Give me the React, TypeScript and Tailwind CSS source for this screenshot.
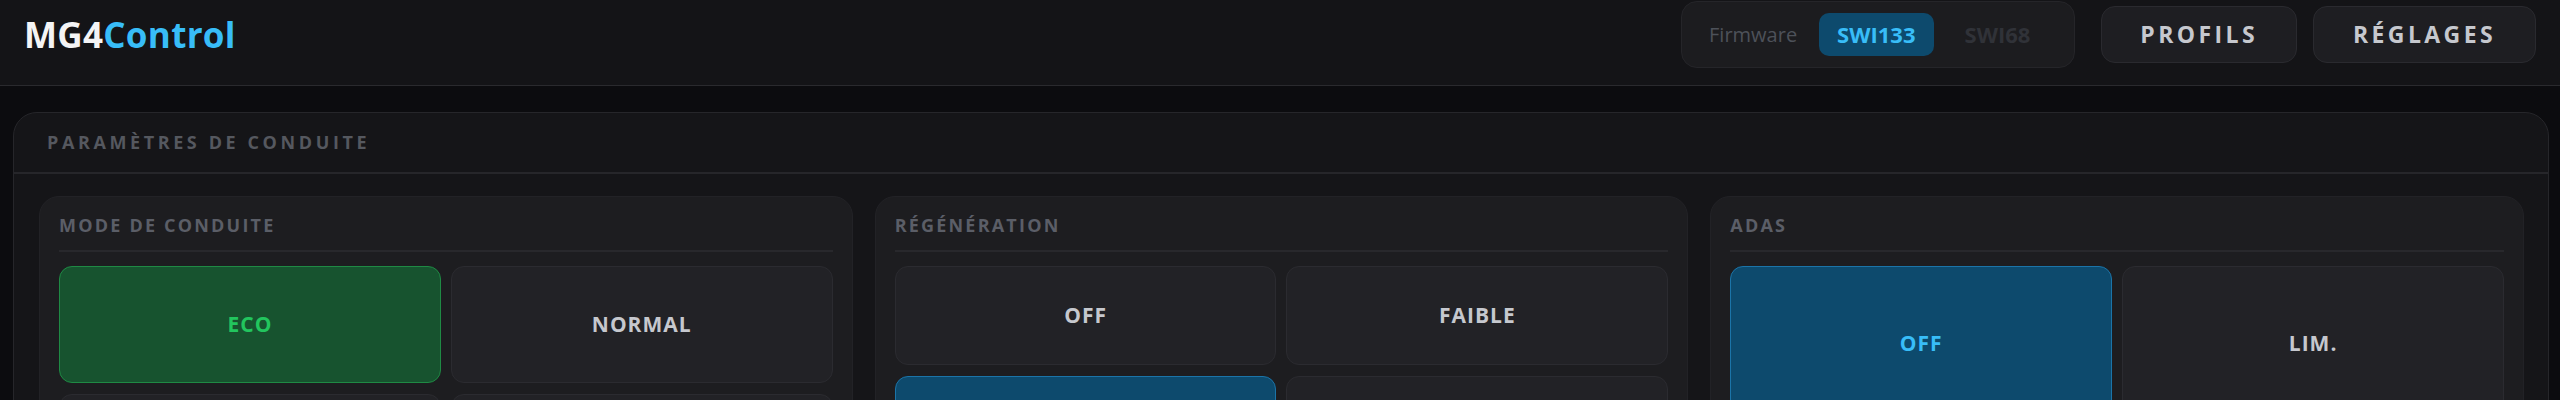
import React from "react";

const font = { fontFamily: '"Open Sans", "Noto Sans", sans-serif' };

function Btn({ label, h, variant }: { label?: string; h: string; variant?: "green" | "blue" }) {
  const base =
    "flex items-center justify-center rounded-[13px] border text-[21px] font-bold tracking-[1px]";
  const v =
    variant === "green"
      ? "bg-[#17532f] border-[#1f8a44] text-[#22c55e]"
      : variant === "blue"
      ? "bg-[#0d4a6d] border-[#1b74a8] text-[#38bdf8]"
      : "bg-[#222226] border-[#2b2b30] text-[#c6c8ce]";
  return <div className={`${base} ${v} ${h}`}>{label}</div>;
}

function Card({ title, children }: { title: string; children: React.ReactNode }) {
  return (
    <div className="rounded-[20px] border border-[#222226] bg-[#1d1d20] px-[19px] pt-[16px] pb-[19px]">
      <div className="h-[24px] leading-[24px] pb-[13px] box-content border-b-2 border-[#28282c] text-[18px] font-bold tracking-[2.2px] text-[#5b5e67]">
        {title}
      </div>
      <div className="mt-[14px] grid grid-cols-2 gap-x-[10px] gap-y-[11px]">{children}</div>
    </div>
  );
}

export default function App() {
  return (
    <div className="min-h-[400px] bg-[#0c0c0f] overflow-hidden" style={font}>
      <header className="h-[86px] bg-[#141417] border-b border-[#2a2a2e] px-[24px] pb-[16px] flex items-center justify-between">
        <div className="text-[35px] font-bold leading-none tracking-[0.3px]">
          <span className="text-[#f4f4f5]">MG4</span>
          <span className="text-[#38bdf8]">Control</span>
        </div>
        <div className="flex items-center">
          <div className="h-[67px] flex items-center rounded-[16px] border border-[#252529] bg-[#1c1c1f] pl-[27px] pr-[26px]">
            <span className="text-[20px] text-[#4d5159] mr-[22px]">Firmware</span>
            <span className="h-[43px] flex items-center px-[18px] rounded-[10px] bg-[#0d4a6d] text-[22px] font-bold text-[#38bdf8]">
              SWI133
            </span>
            <span className="h-[43px] flex items-center px-[18px] ml-[13px] rounded-[10px] text-[22px] font-bold text-[#303238]">
              SWI68
            </span>
          </div>
          <div className="ml-[26px] h-[57px] flex items-center px-[38px] rounded-[14px] border border-[#2a2a2f] bg-[#1e1e22] text-[23px] font-bold tracking-[3.4px] text-[#c6c8ce]">
            PROFILS
          </div>
          <div className="ml-[16px] h-[57px] flex items-center px-[39px] rounded-[14px] border border-[#2a2a2f] bg-[#1e1e22] text-[23px] font-bold tracking-[3.4px] text-[#c6c8ce]">
            RÉGLAGES
          </div>
        </div>
      </header>
      <main className="pt-[26px] pl-[13px] pr-[11px]">
        <section className="rounded-[24px] border border-[#26262a] bg-[#151518]">
          <div className="h-[61px] flex items-center px-[33px] border-b-2 border-[#26262a] text-[18px] font-bold tracking-[3.6px] text-[#55585f]">
            PARAMÈTRES DE CONDUITE
          </div>
          <div className="grid grid-cols-3 gap-[22px] pt-[22px] pl-[25px] pr-[24px] pb-[24px]">
            <Card title="MODE DE CONDUITE">
              <Btn label="ECO" h="h-[117px]" variant="green" />
              <Btn label="NORMAL" h="h-[117px]" />
              <Btn h="h-[117px]" />
              <Btn h="h-[117px]" />
            </Card>
            <Card title="RÉGÉNÉRATION">
              <Btn label="OFF" h="h-[99px]" />
              <Btn label="FAIBLE" h="h-[99px]" />
              <Btn h="h-[99px]" variant="blue" />
              <Btn h="h-[99px]" />
            </Card>
            <Card title="ADAS">
              <Btn label="OFF" h="h-[155px]" variant="blue" />
              <Btn label="LIM." h="h-[155px]" />
            </Card>
          </div>
        </section>
      </main>
    </div>
  );
}
